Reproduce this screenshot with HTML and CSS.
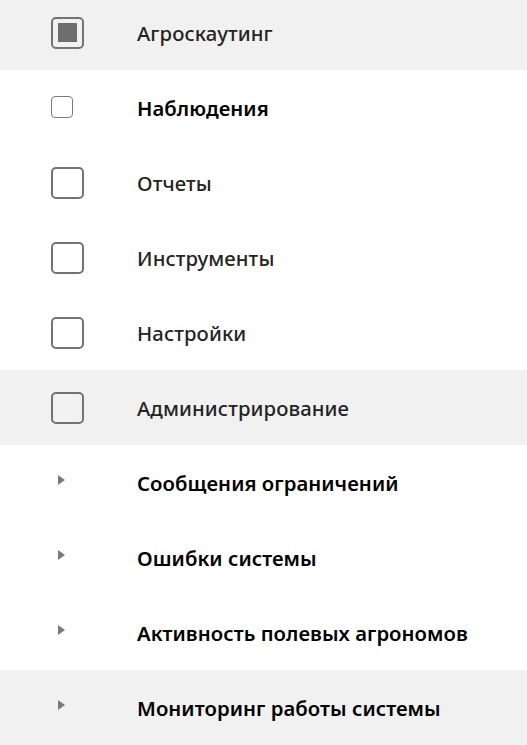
FILE: index.html
```html
<!DOCTYPE html>
<html lang="ru">
<head>
<meta charset="utf-8">
<link rel="stylesheet" href="styles.css">
</head>
<body>
<ul class="menu">
  <li class="row row--hover">
    <span class="icon"><span class="box box--checked"></span></span>
    <span class="label">Агроскаутинг</span>
  </li>
  <li class="row">
    <span class="icon"><span class="box box--small"></span></span>
    <span class="label label--strong">Наблюдения</span>
  </li>
  <li class="row">
    <span class="icon"><span class="box"></span></span>
    <span class="label">Отчеты</span>
  </li>
  <li class="row">
    <span class="icon"><span class="box"></span></span>
    <span class="label">Инструменты</span>
  </li>
  <li class="row">
    <span class="icon"><span class="box"></span></span>
    <span class="label">Настройки</span>
  </li>
  <li class="row row--hover">
    <span class="icon"><span class="box"></span></span>
    <span class="label">Администрирование</span>
  </li>
  <li class="row">
    <span class="icon"><span class="caret"></span></span>
    <span class="label label--strong">Сообщения ограничений</span>
  </li>
  <li class="row">
    <span class="icon"><span class="caret"></span></span>
    <span class="label label--strong">Ошибки системы</span>
  </li>
  <li class="row">
    <span class="icon"><span class="caret"></span></span>
    <span class="label label--strong">Активность полевых агрономов</span>
  </li>
  <li class="row row--hover">
    <span class="icon"><span class="caret"></span></span>
    <span class="label label--strong">Мониторинг работы системы</span>
  </li>
</ul>
</body>
</html>
```
FILE: styles.css
```css
html, body {
  margin: 0;
  padding: 0;
  background: #fff;
  overflow: hidden;
}
.menu {
  list-style: none;
  margin: -5px 0 0 0;
  padding: 0;
  font-family: "Noto Sans", "Open Sans", sans-serif;
}
.row {
  display: flex;
  align-items: center;
  height: 75px;
}
.row--hover {
  background: #f1f1f1;
}
.icon {
  width: 137px;
  flex: none;
  display: flex;
  align-items: center;
  padding-left: 51px;
  box-sizing: border-box;
}
.box {
  width: 33px;
  height: 32px;
  box-sizing: border-box;
  border: 2.5px solid #737373;
  border-radius: 5px;
  display: flex;
  align-items: center;
  justify-content: center;
}
.box--checked::after {
  content: "";
  width: 19px;
  height: 19px;
  background: #6e6e6e;
}
.box--small {
  width: 22px;
  height: 22px;
  border-width: 1.5px;
  border-color: #7a7a7a;
  border-radius: 4px;
  margin-top: -2px;
}
.caret {
  margin-left: 7px;
  margin-top: -6px;
  width: 0;
  height: 0;
  border-top: 5px solid transparent;
  border-bottom: 5px solid transparent;
  border-left: 7px solid #7a7a7a;
}
.label {
  font-size: 20.3px;
  font-weight: 550;
  letter-spacing: 0.1px;
  color: #242424;
  white-space: nowrap;
  margin-top: 1px;
}
.label--strong {
  font-weight: 580;
  letter-spacing: 0.05px;
  color: #000;
}
```
